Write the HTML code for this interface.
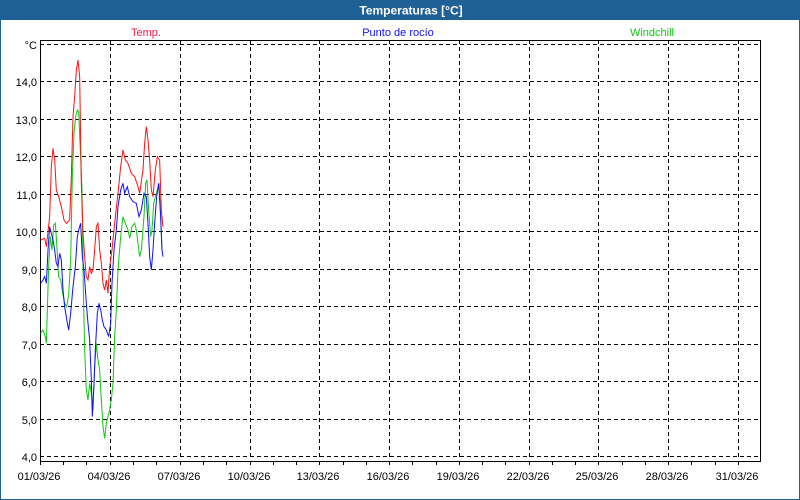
<!DOCTYPE html>
<html><head><meta charset="utf-8"><style>
body{margin:0;width:800px;height:500px;overflow:hidden;background:#fff;font-family:"Liberation Sans",sans-serif}
</style></head><body>
<svg width="800" height="500" xmlns="http://www.w3.org/2000/svg" style="position:absolute;left:0;top:0">
<rect x="0" y="0" width="800" height="500" fill="#1f6096"/>
<rect x="1" y="20" width="798" height="479" fill="#fefffe"/>
<text x="411" y="14.5" fill="#fff" font-size="12" font-weight="bold" text-anchor="middle" font-family="Liberation Sans, sans-serif">Temperaturas [°C]</text>
<g font-size="11" text-anchor="middle" font-family="Liberation Sans, sans-serif">
<text x="146" y="36" fill="#ff1744">Temp.</text>
<text x="398" y="36" fill="#1010ff">Punto de rocío</text>
<text x="652" y="36" fill="#10c810">Windchill</text>
</g>
<g stroke="#000" stroke-width="1" stroke-dasharray="4,3" fill="none">
<path d="M40 44.5H760M40 81.5H760M40 119.5H760M40 156.5H760M40 194.5H760M40 231.5H760M40 269.5H760M40 306.5H760M40 344.5H760M40 381.5H760M40 419.5H760M40 456.5H760"/>
<path d="M110.5 40V460M180.5 40V460M250.5 40V460M319.5 40V460M389.5 40V460M459.5 40V460M529.5 40V460M598.5 40V460M668.5 40V460M738.5 40V460"/>
</g>
<g stroke="#000" stroke-width="1" fill="none">
<path d="M40.5 40V461.5H760.5V40.5H40"/>
<path d="M40.5 461v4M63.5 461v4M86.5 461v4M110.5 461v4M133.5 461v4M156.5 461v4M180.5 461v4M203.5 461v4M226.5 461v4M250.5 461v4M273.5 461v4M296.5 461v4M319.5 461v4M343.5 461v4M366.5 461v4M389.5 461v4M412.5 461v4M436.5 461v4M459.5 461v4M482.5 461v4M505.5 461v4M529.5 461v4M552.5 461v4M575.5 461v4M598.5 461v4M622.5 461v4M645.5 461v4M668.5 461v4M691.5 461v4M715.5 461v4M738.5 461v4"/>
</g>
<g font-size="11" fill="#000" text-anchor="end" font-family="Liberation Sans, sans-serif">
<text x="37" y="49">°C</text>
<text x="37" y="86">14,0</text><text x="37" y="124">13,0</text><text x="37" y="161">12,0</text>
<text x="37" y="199">11,0</text><text x="37" y="236">10,0</text><text x="37" y="274">9,0</text>
<text x="37" y="311">8,0</text><text x="37" y="349">7,0</text><text x="37" y="386">6,0</text>
<text x="37" y="424">5,0</text><text x="37" y="461">4,0</text>
</g>
<g font-size="11" fill="#000" text-anchor="middle" font-family="Liberation Sans, sans-serif">
<text x="39" y="480">01/03/26</text><text x="109" y="480">04/03/26</text><text x="179" y="480">07/03/26</text>
<text x="249" y="480">10/03/26</text><text x="318" y="480">13/03/26</text><text x="388" y="480">16/03/26</text>
<text x="458" y="480">19/03/26</text><text x="528" y="480">22/03/26</text><text x="597" y="480">25/03/26</text>
<text x="667" y="480">28/03/26</text><text x="737" y="480">31/03/26</text>
</g>
<g transform="translate(38,50) scale(0.3333)" fill="none">
<polyline vector-effect="non-scaling-stroke" stroke-width="1" stroke="#10c810" points="8,850 15,840 22,860 25,880 28,780 32,650 37,560 42,600 47,525 52,520 56,580 62,680 68,690 74,730 80,760 86,770 92,735 98,630 103,380 108,250 113,200 118,180 122,185 127,300 132,420 136,720 140,900 145,1020 150,1050 155,1000 160,1030 165,1080 170,950 175,880 180,930 185,960 190,1050 195,1130 200,1165 205,1120 210,1100 215,1080 220,1050 225,1000 230,860 235,780 240,660 248,560 255,500 262,520 270,540 275,565 282,530 290,520 295,540 300,580 305,620 310,600 318,500 323,400 327,390 332,480 338,560 342,540 347,460 352,440 358,420 363,400 368,500 372,600"/>
<polyline vector-effect="non-scaling-stroke" stroke-width="1" stroke="#1010ff" points="8,700 15,690 20,680 25,700 30,600 35,530 40,550 45,570 50,600 55,640 60,650 65,610 70,630 75,720 80,770 88,820 92,840 98,790 105,710 112,650 118,560 122,540 128,520 133,620 138,660 145,760 150,820 155,870 160,990 163,1100 168,1000 172,900 178,790 183,760 188,780 193,810 198,830 205,840 212,860 218,820 222,700 228,600 235,540 240,470 248,420 255,400 260,430 268,410 275,440 285,455 295,460 303,500 310,480 318,430 325,440 330,520 335,620 340,660 345,600 350,520 356,440 362,400 368,500 372,600 375,620"/>
<polyline vector-effect="non-scaling-stroke" stroke-width="1" stroke="#ff1010" points="8,570 20,565 25,590 35,500 40,350 45,295 50,330 55,420 62,440 70,470 78,510 85,520 95,510 100,380 105,200 110,140 115,60 120,30 125,80 130,400 135,550 140,620 145,680 150,690 155,650 160,670 165,660 170,600 175,530 180,520 185,600 190,640 195,700 200,720 205,690 210,730 215,650 222,600 230,520 240,430 248,350 255,300 262,330 270,340 280,370 290,380 300,410 305,430 315,360 320,280 325,230 330,270 335,330 340,420 345,440 352,360 358,320 365,330 370,480 375,530"/>
</g>
</svg>
</body></html>
